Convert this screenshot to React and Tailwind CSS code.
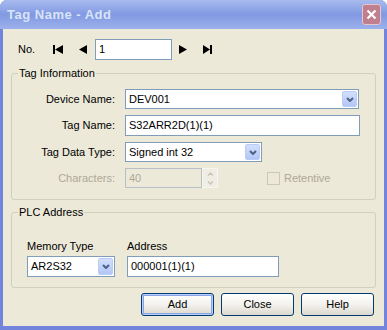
import React from 'react';

const FONT = { fontFamily: '"Liberation Sans", Arial, sans-serif' };

const Chevron = () => (
  <svg width="8" height="5" viewBox="0 0 8 5">
    <polyline points="1,1 4,4 7,1" fill="none" stroke="#4D6185" strokeWidth="2" />
  </svg>
);

const Combo = ({ value, className }) => (
  <div className={`flex items-stretch bg-white border border-[#7F9DB9] ${className}`}>
    <div className="flex-1 flex items-center pl-[3px] text-[11px] text-black">{value}</div>
    <div className="w-[15px] my-[1px] mr-[1px] rounded-[2px] bg-gradient-to-b from-[#D2DEFC] to-[#B3C7F6] border border-[#BACCF6] flex items-center justify-center">
      <Chevron />
    </div>
  </div>
);

const Field = ({ value, className }) => (
  <div className={`flex items-center bg-white border border-[#7F9DB9] pl-[3px] text-[11px] text-black ${className}`}>
    {value}
  </div>
);

const Label = ({ children, disabled }) => (
  <div className={`flex items-center justify-end text-[11px] ${disabled ? 'text-[#ACA899]' : 'text-black'}`}>
    {children}
  </div>
);

const XpButton = ({ children, isDefault }) => (
  <button
    className={`w-[73px] h-[23px] rounded-[3px] border border-[#003C74] bg-gradient-to-b from-white via-[#F3F2EE] to-[#DCD8CD] text-[11px] text-black ${
      isDefault ? 'shadow-[inset_0_0_0_1px_#B8CEF6,inset_0_0_0_2px_#8AA6E8]' : ''
    }`}
  >
    {children}
  </button>
);

export default function App() {
  return (
    <div className="w-[387px] h-[330px] flex flex-col bg-[#7384DC] rounded-t-[7px] overflow-hidden" style={FONT}>
      {/* Title bar */}
      <div className="h-[29px] flex items-center justify-between pl-[7px] pr-[6px] bg-gradient-to-b from-[#A8BBEE] via-[#8299E2] to-[#9CB1EB]">
        <span className="text-[13px] font-bold tracking-[0.5px] text-[#D8E4F8]">Tag Name - Add</span>
        <div className="w-[19px] h-[21px] rounded-[3px] border border-[#E4C6CC] bg-[#BF7F8E] flex items-center justify-center">
          <svg width="11" height="11" viewBox="0 0 11 11">
            <path d="M1.5 1.5 L9.5 9.5 M9.5 1.5 L1.5 9.5" stroke="white" strokeWidth="2.2" />
          </svg>
        </div>
      </div>

      {/* Body */}
      <div className="flex-1 mx-[3px] mb-[4px] bg-[#ECE9D8] flex flex-col">
        {/* Navigation row */}
        <div className="mt-[10px] pl-[15px] h-[21px] flex items-center">
          <span className="w-[35px] text-[11px] text-black">No.</span>
          <svg width="10" height="9" viewBox="0 0 10 9">
            <rect x="0" y="0" width="2" height="9" fill="black" />
            <polygon points="10,0 10,9 2,4.5" fill="black" />
          </svg>
          <svg className="ml-[15px]" width="9" height="9" viewBox="0 0 9 9">
            <polygon points="9,0 9,9 1,4.5" fill="black" />
          </svg>
          <Field value="1" className="ml-[8px] w-[77px] h-[21px]" />
          <svg className="ml-[7px]" width="9" height="9" viewBox="0 0 9 9">
            <polygon points="0,0 0,9 8,4.5" fill="black" />
          </svg>
          <svg className="ml-[15px]" width="9" height="9" viewBox="0 0 9 9">
            <polygon points="0,0 0,9 7,4.5" fill="black" />
            <rect x="7" y="0" width="2" height="9" fill="black" />
          </svg>
        </div>

        {/* Tag Information */}
        <fieldset className="mt-[7px] ml-[8px] w-[365px] border border-[#D0D0BF] rounded-[3px] pt-[9px] pb-[11px]">
          <legend className="ml-[6px] px-[1px] text-[11px] leading-[13px] text-black">Tag Information</legend>
          <div className="grid grid-cols-[103px_1fr] gap-x-[10px] gap-y-[6px]">
            <Label>Device Name:</Label>
            <Combo value="DEV001" className="w-[234px] h-[20px]" />
            <Label>Tag Name:</Label>
            <Field value="S32ARR2D(1)(1)" className="w-[235px] h-[21px]" />
            <Label>Tag Data Type:</Label>
            <Combo value="Signed int 32" className="w-[137px] h-[20px]" />
            <Label disabled>Characters:</Label>
            <div className="flex items-center h-[20px]">
              <div className="w-[77px] h-[20px] border border-[#B7C0C9] flex items-center pl-[3px] text-[11px] text-[#ACA899]">40</div>
              <div className="w-[16px] h-[20px] border border-[#F6F5F0] bg-[#EFEDE4] flex flex-col">
                <div className="flex-1 flex items-center justify-center">
                  <svg width="7" height="4" viewBox="0 0 7 4">
                    <polyline points="1,3.5 3.5,1 6,3.5" fill="none" stroke="#C9C7BA" strokeWidth="1.5" />
                  </svg>
                </div>
                <div className="flex-1 flex items-center justify-center">
                  <svg width="7" height="4" viewBox="0 0 7 4">
                    <polyline points="1,0.5 3.5,3 6,0.5" fill="none" stroke="#C9C7BA" strokeWidth="1.5" />
                  </svg>
                </div>
              </div>
              <div className="ml-[49px] w-[13px] h-[13px] border border-[#CAC8BB]" />
              <span className="ml-[4px] text-[11px] text-[#ACA899]">Retentive</span>
            </div>
          </div>
        </fieldset>

        {/* PLC Address */}
        <fieldset className="mt-[6px] ml-[8px] w-[365px] border border-[#D0D0BF] rounded-[3px] pt-[21px] pb-[10px] pl-[15px]">
          <legend className="-ml-[9px] px-[1px] text-[11px] leading-[13px] text-black">PLC Address</legend>
          <div className="flex gap-[12px]">
            <div className="flex flex-col gap-[3px]">
              <span className="text-[11px] leading-[13px] text-black">Memory Type</span>
              <Combo value="AR2S32" className="w-[88px] h-[21px]" />
            </div>
            <div className="flex flex-col gap-[3px]">
              <span className="text-[11px] leading-[13px] text-black">Address</span>
              <Field value="000001(1)(1)" className="w-[152px] h-[21px]" />
            </div>
          </div>
        </fieldset>

        {/* Buttons */}
        <div className="mt-[5px] pr-[10px] flex justify-end gap-[7px]">
          <XpButton isDefault>Add</XpButton>
          <XpButton>Close</XpButton>
          <XpButton>Help</XpButton>
        </div>
      </div>
    </div>
  );
}
